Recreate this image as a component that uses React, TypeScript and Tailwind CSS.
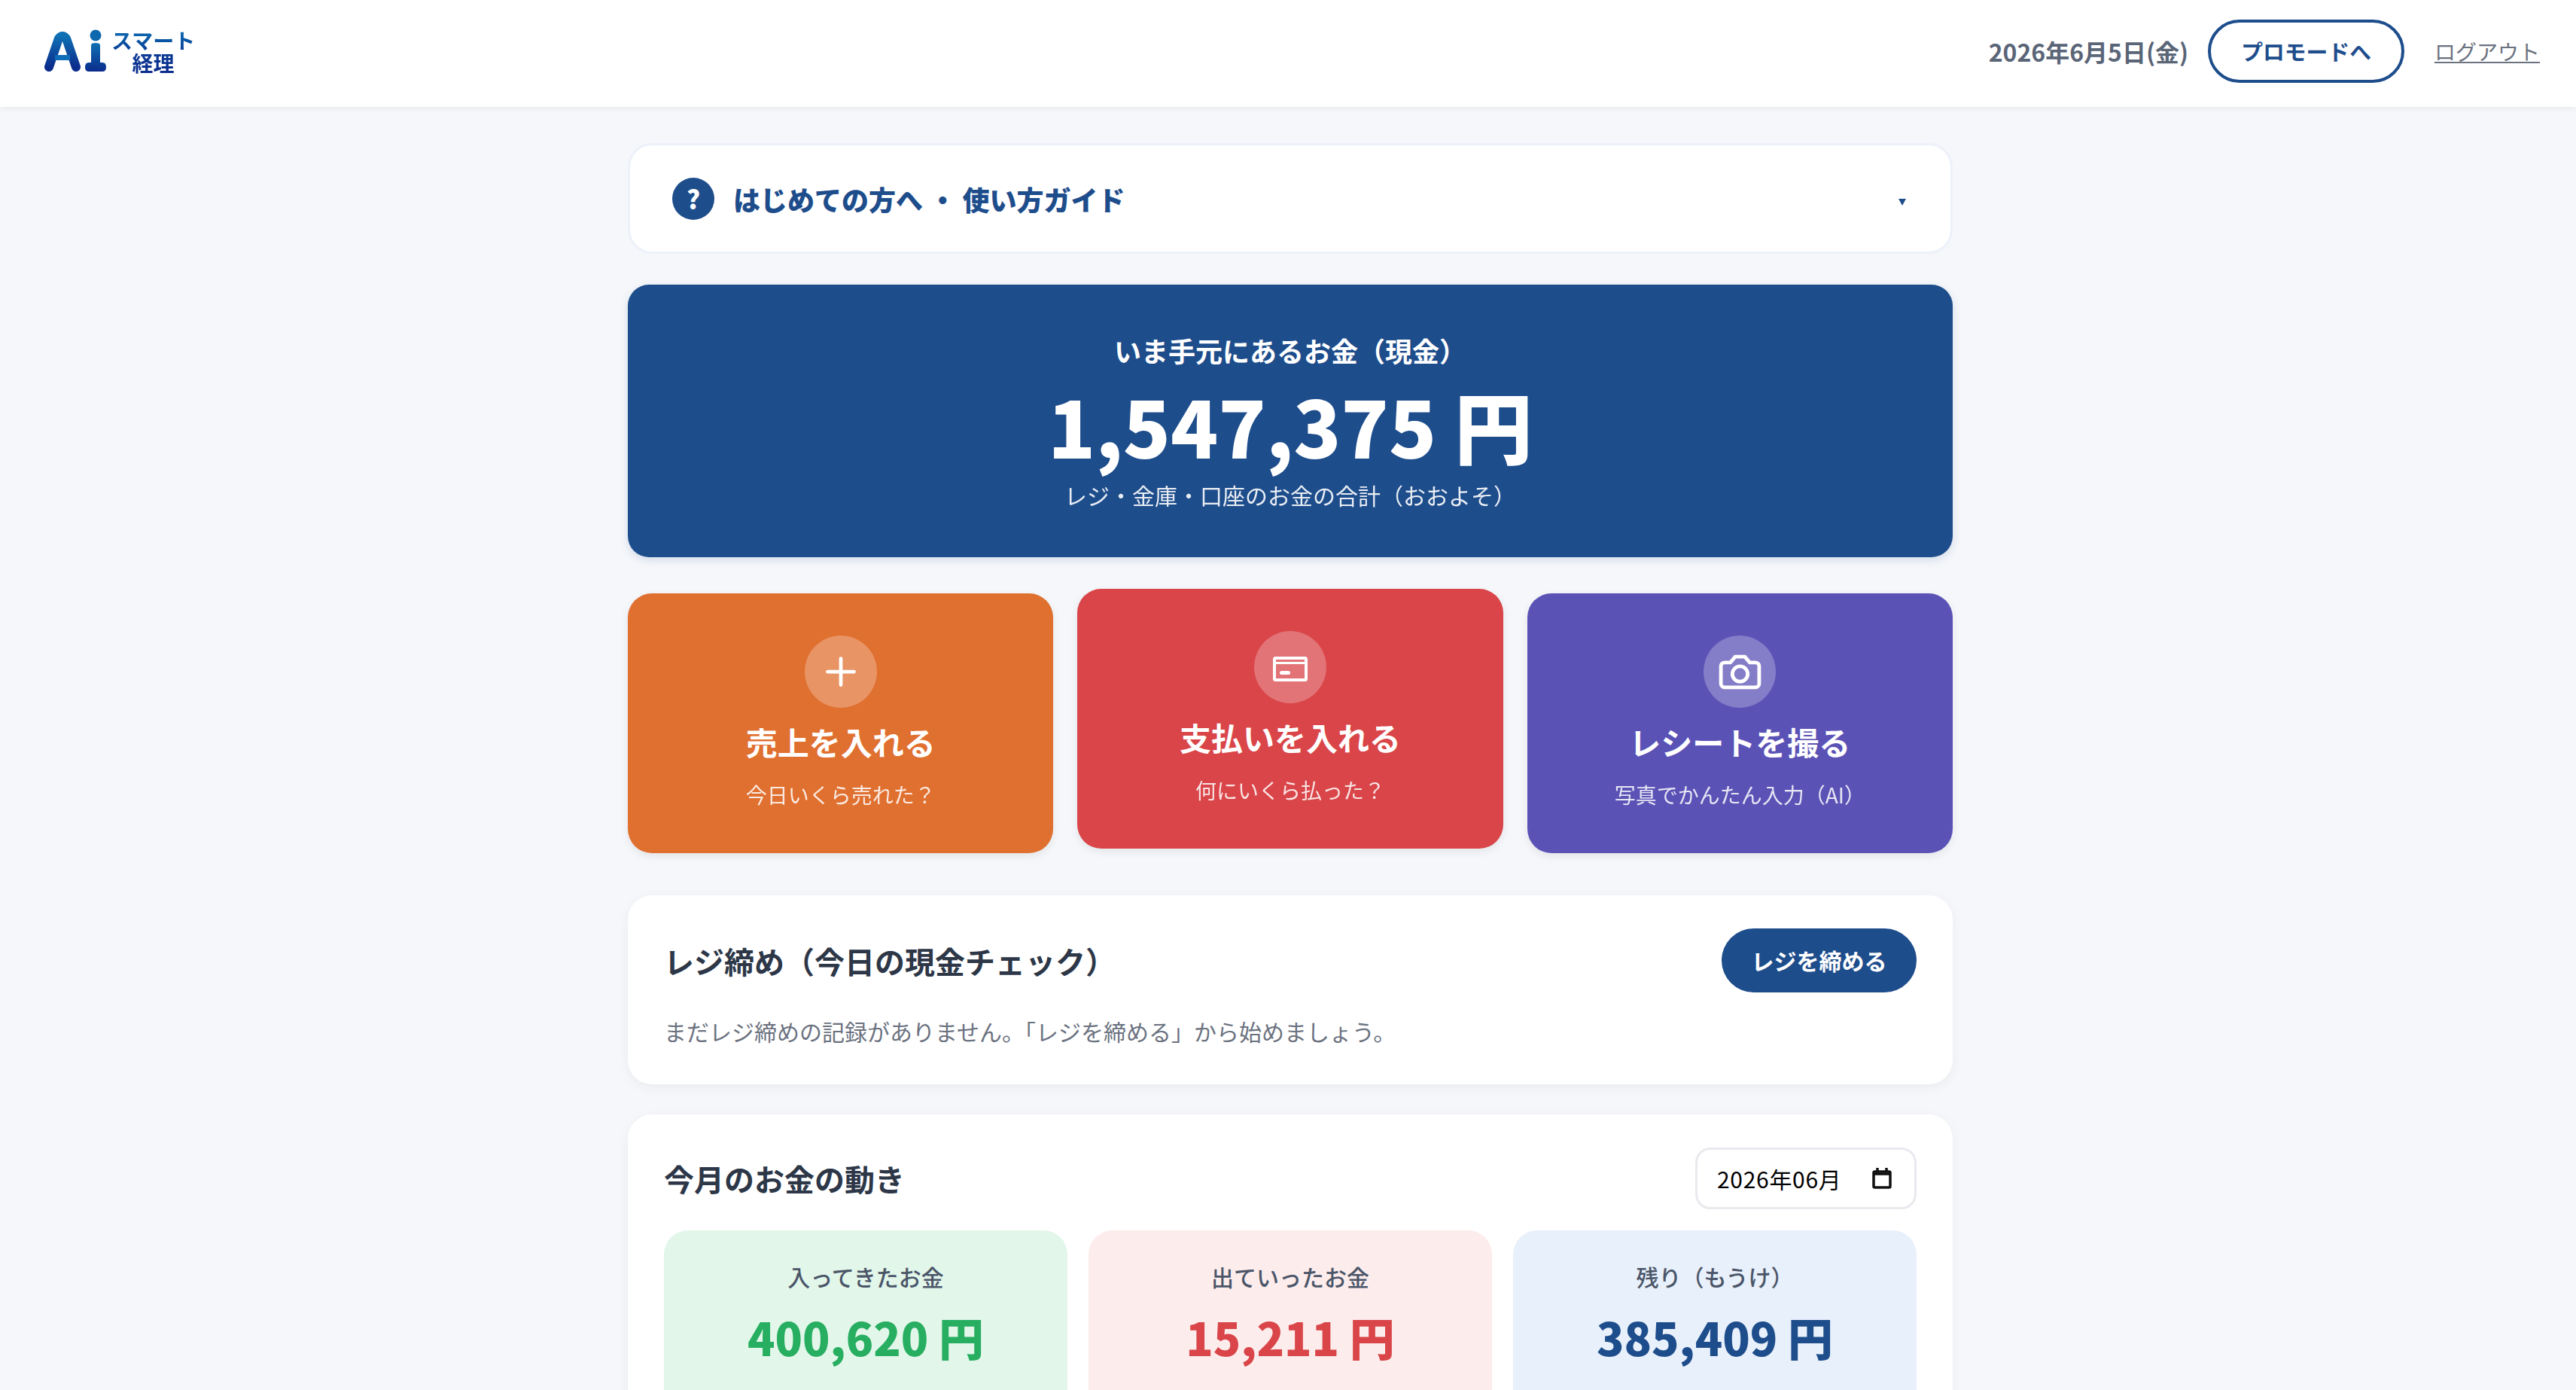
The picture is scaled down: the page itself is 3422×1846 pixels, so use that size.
const actions = [
  { title: "売上を入れる", sub: "今日いくら売れた？", bg: "bg-[#e07030]", icon: "plus", lifted: false },
  { title: "支払いを入れる", sub: "何にいくら払った？", bg: "bg-[#d94548]", icon: "card", lifted: true },
  { title: "レシートを撮る", sub: "写真でかんたん入力（AI）", bg: "bg-[#5b52b6]", icon: "camera", lifted: false },
];

const stats = [
  { label: "入ってきたお金", value: "400,620 円", bg: "bg-[#e2f6ea]", color: "text-[#27ae60]" },
  { label: "出ていったお金", value: "15,211 円", bg: "bg-[#fdecec]", color: "text-[#d94548]" },
  { label: "残り（もうけ）", value: "385,409 円", bg: "bg-[#e8f0fb]", color: "text-[#1e4d8c]" },
];

const Logo = () => (
  <div className="flex items-center">
    <svg width="84" height="58" viewBox="0 0 84 58" className="shrink-0">
      <defs>
        <linearGradient id="logoBlue" x1="0" y1="0" x2="0" y2="1">
          <stop offset="0" stopColor="#0f70b4" />
          <stop offset="1" stopColor="#0b2c8c" />
        </linearGradient>
      </defs>
      <path
        d="M7 50 L20 12 Q25 6 30 12 L43 50"
        fill="none"
        stroke="url(#logoBlue)"
        strokeWidth="12"
        strokeLinecap="round"
        strokeLinejoin="round"
      />
      <rect x="15" y="34" width="20" height="7" fill="#0f6cb8" />
      <circle cx="69" cy="8" r="7.5" fill="#0d68ae" />
      <path d="M63 21 Q63 18 69 18 Q75 18 75 21 V44 H78 Q83 44 83 50 Q83 56 78 56 H60 Q55 56 55 50 Q55 44 60 44 H63 Z" fill="url(#logoBlue)" />
    </svg>
    <div className="ml-[6px] flex flex-col items-center text-[28px] leading-[30px] font-bold">
      <span className="bg-gradient-to-b from-[#0f70b4] to-[#0b3c96] bg-clip-text text-transparent">スマート</span>
      <span className="bg-gradient-to-b from-[#0b3c96] to-[#0b2c8c] bg-clip-text text-transparent">経理</span>
    </div>
  </div>
);

const ActionIcon = ({ icon }: { icon: string }) => {
  if (icon === "plus") {
    return (
      <svg width="60" height="60" viewBox="0 0 24 24" fill="none" stroke="currentColor" strokeWidth="1.9" strokeLinecap="round">
        <path d="M12 5v14M5 12h14" />
      </svg>
    );
  }
  if (icon === "camera") {
    return (
      <svg width="61" height="61" viewBox="0 0 24 24" fill="none" stroke="currentColor" strokeWidth="1.9" strokeLinecap="round" strokeLinejoin="round">
        <path d="M14.5 4h-5L7 7H4a2 2 0 0 0-2 2v9a2 2 0 0 0 2 2h16a2 2 0 0 0 2-2V9a2 2 0 0 0-2-2h-3l-2.5-3z" />
        <circle cx="12" cy="13" r="4" />
      </svg>
    );
  }
  return (
    <svg width="64" height="64" viewBox="0 0 64 64" fill="none">
      <rect x="11" y="20" width="42" height="29" rx="1.5" stroke="currentColor" strokeWidth="4" />
      <path d="M9 26.5h46" stroke="currentColor" strokeWidth="3" />
      <rect x="18" y="37" width="14" height="5" rx="2.5" fill="currentColor" />
    </svg>
  );
};

export default function App() {
  return (
    <div className="h-screen overflow-hidden bg-[#f5f7fa] font-['Noto_Sans_CJK_JP','Noto_Sans',sans-serif] text-[#2d3748]">
      <header className="flex h-[142px] items-center justify-between bg-white pr-[48px] pb-[6px] pl-[58px] shadow-[0_2px_8px_rgba(0,0,0,0.06)]">
        <Logo />
        <div className="flex items-center gap-[30px]">
          <span className="-mr-[4px] text-[32px] font-bold text-[#5a6577]">2026年6月5日(金)</span>
          <button className="h-[84px] rounded-full border-4 border-[#1e4d8c] px-[40px] text-[28.8px] font-bold text-[#1e4d8c]">
            プロモードへ
          </button>
          <a className="ml-[10px] text-[28px] text-[#6b7280] underline">ログアウト</a>
        </div>
      </header>

      <div className="pl-[6px]">
        <main className="mx-auto w-[1760px] pt-[48px]">
          <div className="flex h-[147px] items-center justify-between rounded-[32px] border-[3px] border-[#edf1fa] bg-white pr-[57px] pl-[56px]">
            <div className="flex items-center gap-[25px]">
              <span className="flex size-[56px] items-center justify-center rounded-full bg-[#1e4d8c] text-[34px] font-black text-white">?</span>
              <span className="text-[36px] font-black text-[#1e4d8c]">はじめての方へ ・ 使い方ガイド</span>
            </div>
            <svg width="10" height="9" viewBox="0 0 10 9" className="mt-[10px] mr-[2px] text-[#1e4d8c]">
              <path d="M0 0h10L5 9z" fill="currentColor" />
            </svg>
          </div>

          <section className="mt-[41px] flex h-[362px] flex-col items-center rounded-[28px] bg-[#1e4d8c] pt-[61px] text-white shadow-[0_4px_12px_rgba(30,77,140,0.15)]">
            <p className="text-[36px] leading-[52px] font-bold">いま手元にあるお金（現金）</p>
            <p className="mt-[13px] text-[104px] leading-[120px] font-black">1,547,375 円</p>
            <p className="mt-[11px] text-[30px] leading-[44px] opacity-90">レジ・金庫・口座のお金の合計（おおよそ）</p>
          </section>

          <div className="mt-[48px] grid grid-cols-3 gap-[32px]">
            {actions.map((a) => (
              <div
                key={a.title}
                className={`flex h-[345px] flex-col items-center rounded-[32px] pt-[56px] text-white shadow-[0_4px_12px_rgba(0,0,0,0.08)] ${a.bg} ${a.lifted ? "-translate-y-[6px]" : ""}`}
              >
                <span className="flex size-[96px] items-center justify-center rounded-full bg-white/25">
                  <ActionIcon icon={a.icon} />
                </span>
                <p className="mt-[15px] text-[42px] leading-[60px] font-bold">{a.title}</p>
                <p className="mt-[20px] text-[28px] leading-[40px] opacity-85">{a.sub}</p>
              </div>
            ))}
          </div>

          <section className="mt-[56px] h-[251px] rounded-[32px] bg-white px-[48px] pt-[44px] shadow-[0_4px_16px_rgba(0,0,0,0.05)]">
            <div className="flex items-center justify-between">
              <h2 className="text-[40px] font-bold">レジ締め（今日の現金チェック）</h2>
              <button className="h-[85px] w-[259px] rounded-full bg-[#1e4d8c] text-[30px] font-bold text-white">レジを締める</button>
            </div>
            <p className="mt-[29px] text-[30px] text-[#6b7280]">まだレジ締めの記録がありません。「レジを締める」から始めましょう。</p>
          </section>

          <section className="mt-[40px] rounded-[32px] bg-white px-[48px] pt-[44px] pb-[48px] shadow-[0_4px_16px_rgba(0,0,0,0.05)]">
            <div className="flex items-center justify-between">
              <h2 className="text-[40px] font-bold">今月のお金の動き</h2>
              <div className="flex h-[82px] w-[294px] items-center justify-between rounded-[20px] border-[3px] border-[#e8eaee] pr-[30px] pl-[26px] text-[30px] text-black">
                <span className="tracking-[0.7px]">2026年06月</span>
                <svg width="26" height="28" viewBox="0 0 26 28" fill="none" stroke="#111" strokeWidth="3.5">
                  <rect x="2" y="5" width="22" height="21" rx="1.5" />
                  <path d="M7 0v5M19 0v5M2 8h22" />
                </svg>
              </div>
            </div>
            <div className="mt-[28px] grid grid-cols-3 gap-[28px]">
              {stats.map((s) => (
                <div key={s.label} className={`flex h-[280px] flex-col items-center rounded-[32px] pt-[39px] ${s.bg}`}>
                  <p className="text-[30px] leading-[44px] font-medium text-[#4a5568]">{s.label}</p>
                  <p className={`mt-[18px] text-[60px] leading-[80px] font-black ${s.color}`}>{s.value}</p>
                </div>
              ))}
            </div>
          </section>
        </main>
      </div>
    </div>
  );
}
